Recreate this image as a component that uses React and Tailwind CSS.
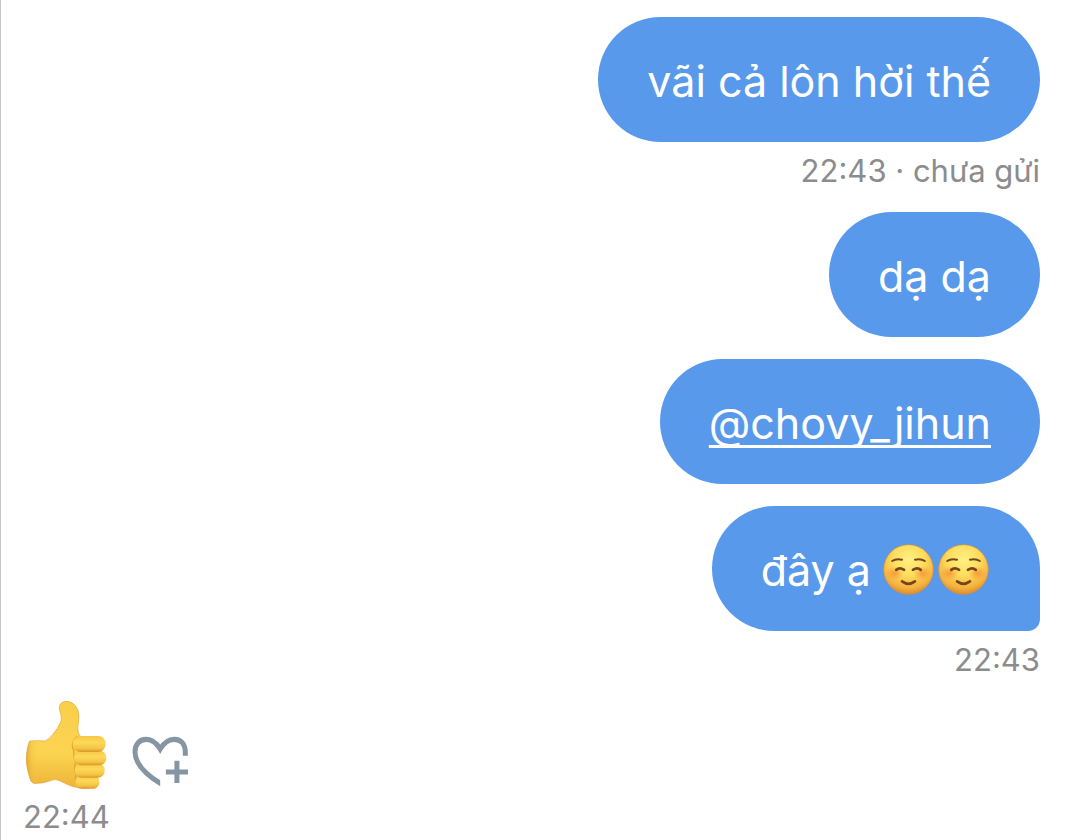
import React from "react";

function Smile({ id }) {
  return (
    <svg viewBox="0 0 150 150" className="h-[51px] w-[51px] shrink-0" role="img" aria-label="☺️">
      <defs>
        <radialGradient id={id + "-face"} cx="50%" cy="30%" r="72%">
          <stop offset="0" stopColor="#fff184" />
          <stop offset="0.45" stopColor="#fddc5c" />
          <stop offset="0.8" stopColor="#f4b13e" />
          <stop offset="1" stopColor="#d98429" />
        </radialGradient>
        <radialGradient id={id + "-cheek"}>
          <stop offset="0" stopColor="#f58a34" stopOpacity="0.75" />
          <stop offset="1" stopColor="#f58a34" stopOpacity="0" />
        </radialGradient>
      </defs>
      <circle cx="75" cy="75" r="73" fill={"url(#" + id + "-face)"} stroke="#d9902f" strokeWidth="2" />
      <ellipse cx="34" cy="86" rx="27" ry="21" fill={"url(#" + id + "-cheek)"} />
      <ellipse cx="116" cy="86" rx="27" ry="21" fill={"url(#" + id + "-cheek)"} />
      <g fill="none" stroke="#75451b" strokeLinecap="round">
        <path d="M27 50Q38 42 56 46" strokeWidth="6" />
        <path d="M94 46Q112 42 123 50" strokeWidth="6" />
        <path d="M39 76Q49 68 62 76" strokeWidth="8" />
        <path d="M88 76Q101 68 111 76" strokeWidth="8" />
        <path d="M56 110Q75 124 94 110" strokeWidth="8" />
      </g>
    </svg>
  );
}

function ThumbsUp() {
  return (
    <svg viewBox="30 15 250 270" className="h-[90px] w-[83px]" role="img" aria-label="👍">
      <defs>
        <linearGradient id="hand" x1="0" y1="0" x2="0" y2="1">
          <stop offset="0" stopColor="#f9cf49" />
          <stop offset="0.6" stopColor="#fbd452" />
          <stop offset="1" stopColor="#eeb337" />
        </linearGradient>
        <linearGradient id="finger" x1="0" y1="0" x2="0" y2="1">
          <stop offset="0" stopColor="#f6c642" />
          <stop offset="0.4" stopColor="#fdd95a" />
          <stop offset="0.78" stopColor="#f6c443" />
          <stop offset="1" stopColor="#d89727" />
        </linearGradient>
        <linearGradient id="wrist" x1="0" y1="0" x2="1" y2="0">
          <stop offset="0" stopColor="#d99a2c" stopOpacity="0.7" />
          <stop offset="0.07" stopColor="#e5a832" stopOpacity="0.25" />
          <stop offset="0.2" stopColor="#fbd452" stopOpacity="0" />
        </linearGradient>
      </defs>
      <path d="M44 138Q68 136 90 138Q103 134 113 119Q130 100 138 80Q141 68 137 54C131 40 132 24 147 20C164 15 182 25 189 45C195 61 191 80 189 97Q188 112 194 121L204 128L222 258L217 281Q182 280 160 270Q141 260 130 256Q119 252 108 257Q86 266 59 266C46 264 45 250 39 230C31 200 34 160 44 138Z" fill="url(#hand)" stroke="#e0a331" strokeWidth="2" />
      <path d="M44 138Q68 136 90 138Q103 134 113 119Q130 100 138 80Q141 68 137 54C131 40 132 24 147 20C164 15 182 25 189 45C195 61 191 80 189 97Q188 112 194 121L204 128L222 258L217 281Q182 280 160 270Q141 260 130 256Q119 252 108 257Q86 266 59 266C46 264 45 250 39 230C31 200 34 160 44 138Z" fill="url(#wrist)" />
      <path d="M188 124C174 134 169 152 177 166C177 178 176 190 183 202C178 214 179 227 184 239C181 252 183 266 194 274" fill="none" stroke="#daa02f" strokeWidth="5" opacity="0.75" />
      <rect x="182" y="240" width="72" height="42" rx="20" fill="url(#finger)" />
      <rect x="180" y="205" width="90" height="44" rx="21" fill="url(#finger)" />
      <rect x="178" y="167" width="97" height="44" rx="21" fill="url(#finger)" />
      <rect x="174" y="123" width="99" height="48" rx="23" fill="url(#finger)" />
    </svg>
  );
}

function HeartPlus() {
  return (
    <svg viewBox="20 32 170 152" className="h-[51px] w-[57px]" fill="none" stroke="#8595a3" aria-hidden="true">
      <clipPath id="heart-cut">
        <path d="M0 0H200V91H104V200H0Z" />
      </clipPath>
      <path clipPath="url(#heart-cut)" d="M114 179C62 149 29 115 29 79C29 56 43 42 62 42C82 42 94 54 104 71C114 54 126 42 146 42C167 42 179 57 179 80V95" strokeWidth="15" />
      <path d="M154 106V172M121 139H187" strokeWidth="15" />
    </svg>
  );
}

function Bubble({ last, children }) {
  return (
    <div
      className={
        "flex min-h-[125px] max-w-full items-center bg-[#5899eb] px-[49px] pt-[2px] text-[43px] leading-[52px] text-white " +
        (last ? "rounded-[63px] rounded-br-[12px]" : "rounded-[63px]")
      }
    >
      {children}
    </div>
  );
}

function Time({ children }) {
  return <p className="text-[31px] leading-[38px] text-[#8b8c8e]">{children}</p>;
}

export default function App() {
  return (
    <main className="flex min-h-screen flex-col border-l border-[#c4c5c9] bg-white font-['Inter','Noto_Sans',sans-serif]">
      <section className="flex flex-col items-end pt-[17px] pr-10 pl-6">
        <Bubble>vãi cả lôn hời thế</Bubble>
        <div className="pt-[10px] pb-[22px]">
          <Time>22:43 · chưa gửi</Time>
        </div>
        <div className="flex flex-col items-end gap-[22px]">
          <Bubble>dạ dạ</Bubble>
          <Bubble>
            <a href="#chovy_jihun" className="underline decoration-[3px] underline-offset-[6px] [text-decoration-skip-ink:none]">
              @chovy_jihun
            </a>
          </Bubble>
          <Bubble last>
            <span>đây ạ</span>
            <span className="flex gap-1 pr-[2px] pl-3">
              <Smile id="smile-a" />
              <Smile id="smile-b" />
            </span>
          </Bubble>
        </div>
        <div className="pt-[10px]">
          <Time>22:43</Time>
        </div>
      </section>
      <section className="flex flex-col items-start pt-[21px] pl-[22px]">
        <div className="flex items-end gap-6 pl-[2px]">
          <ThumbsUp />
          <button type="button" aria-label="Thả cảm xúc" className="pb-[3px]">
            <HeartPlus />
          </button>
        </div>
        <div className="pt-[8px]">
          <Time>22:44</Time>
        </div>
      </section>
    </main>
  );
}
